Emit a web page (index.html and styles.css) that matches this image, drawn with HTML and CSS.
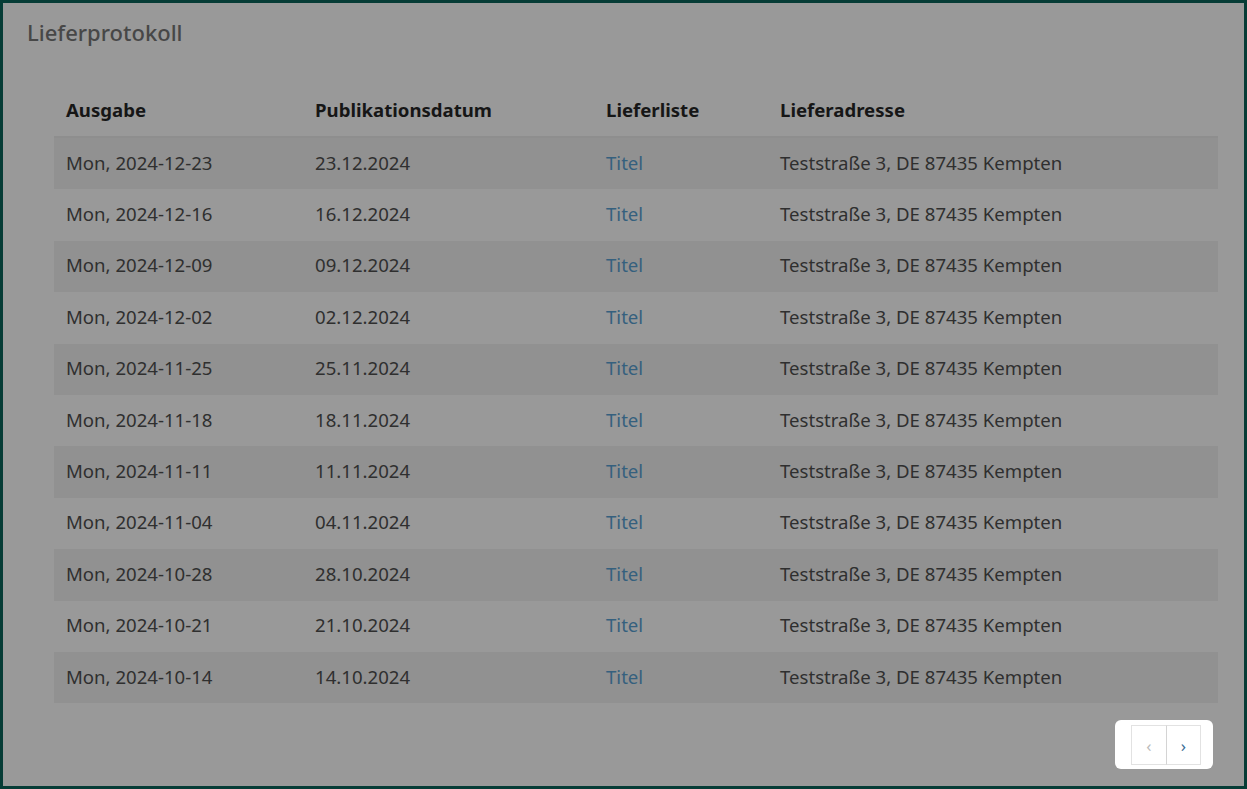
FILE: index.html
```html
<!DOCTYPE html>
<html lang="de">
<head>
<meta charset="utf-8">
<title>Lieferprotokoll</title>
<link rel="stylesheet" href="styles.css">
</head>
<body>
<div class="frame">
  <h1 class="title">Lieferprotokoll</h1>
  <div class="table-wrap">
    <table class="log">
      <colgroup>
        <col class="c1"><col class="c2"><col class="c3"><col class="c4">
      </colgroup>
      <thead>
        <tr><th>Ausgabe</th><th>Publikationsdatum</th><th>Lieferliste</th><th>Lieferadresse</th></tr>
      </thead>
      <tbody>
        <tr><td>Mon, 2024-12-23</td><td>23.12.2024</td><td><a href="#">Titel</a></td><td>Teststraße 3, DE 87435 Kempten</td></tr>
        <tr><td>Mon, 2024-12-16</td><td>16.12.2024</td><td><a href="#">Titel</a></td><td>Teststraße 3, DE 87435 Kempten</td></tr>
        <tr><td>Mon, 2024-12-09</td><td>09.12.2024</td><td><a href="#">Titel</a></td><td>Teststraße 3, DE 87435 Kempten</td></tr>
        <tr><td>Mon, 2024-12-02</td><td>02.12.2024</td><td><a href="#">Titel</a></td><td>Teststraße 3, DE 87435 Kempten</td></tr>
        <tr><td>Mon, 2024-11-25</td><td>25.11.2024</td><td><a href="#">Titel</a></td><td>Teststraße 3, DE 87435 Kempten</td></tr>
        <tr><td>Mon, 2024-11-18</td><td>18.11.2024</td><td><a href="#">Titel</a></td><td>Teststraße 3, DE 87435 Kempten</td></tr>
        <tr><td>Mon, 2024-11-11</td><td>11.11.2024</td><td><a href="#">Titel</a></td><td>Teststraße 3, DE 87435 Kempten</td></tr>
        <tr><td>Mon, 2024-11-04</td><td>04.11.2024</td><td><a href="#">Titel</a></td><td>Teststraße 3, DE 87435 Kempten</td></tr>
        <tr><td>Mon, 2024-10-28</td><td>28.10.2024</td><td><a href="#">Titel</a></td><td>Teststraße 3, DE 87435 Kempten</td></tr>
        <tr><td>Mon, 2024-10-21</td><td>21.10.2024</td><td><a href="#">Titel</a></td><td>Teststraße 3, DE 87435 Kempten</td></tr>
        <tr><td>Mon, 2024-10-14</td><td>14.10.2024</td><td><a href="#">Titel</a></td><td>Teststraße 3, DE 87435 Kempten</td></tr>
      </tbody>
    </table>
  </div>
  <div class="pager-row">
    <nav class="pager">
      <span class="pg-btn disabled">&lsaquo;</span><a class="pg-btn" href="#">&rsaquo;</a>
    </nav>
  </div>
</div>
</body>
</html>
```

FILE: styles.css
```css
html, body {
  margin: 0;
  padding: 0;
}
body {
  font-family: "Noto Sans", "Open Sans", sans-serif;
  color: #2e2e2e;
  background: #999999;
}
.frame {
  box-sizing: border-box;
  width: 1247px;
  height: 789px;
  border: 3px solid #063c36;
  background: #999999;
  padding: 15px 26px 0 24px;
}
.title {
  margin: 0;
  font-size: 22px;
  font-weight: 500;
  color: #474747;
  line-height: 28px;
}
.table-wrap {
  padding: 39px 0 0 27px;
}
.log {
  width: 100%;
  border-collapse: collapse;
  font-size: 18.6px;
}
.c1 { width: 249px; }
.c2 { width: 291px; }
.c3 { width: 174px; }
.log th {
  text-align: left;
  font-weight: 700;
  color: #161616;
  padding: 0 12px 2px;
  height: 49px;
  border-bottom: 2px solid #8e8e8e;
}
.log td {
  padding: 0 12px 3px;
  height: 48.4px;
  color: #2f2f2f;
}
.log tbody tr:nth-child(odd) {
  background: #919191;
}
.log a {
  color: #35607e;
  text-decoration: none;
}
.pager-row {
  display: flex;
  justify-content: flex-end;
  padding: 17px 5px 0 0;
}
.pager {
  display: flex;
  background: #ffffff;
  border-radius: 6px;
  padding: 5px 12px 4px 16px;
}
.pg-btn {
  box-sizing: border-box;
  width: 35px;
  height: 40px;
  display: flex;
  align-items: center;
  justify-content: center;
  border: 1px solid #e2e2e2;
  font-size: 17px;
  color: #3a6d94;
  text-decoration: none;
}
.pg-btn + .pg-btn {
  border-left: 1px solid #d4d4d4;
}
.pg-btn.disabled {
  color: #bbbbbb;
  border-right: none;
}
```
